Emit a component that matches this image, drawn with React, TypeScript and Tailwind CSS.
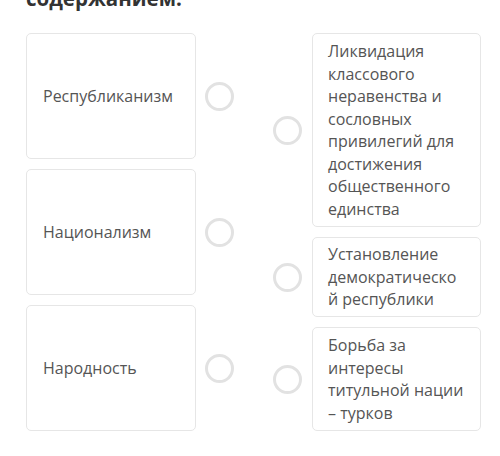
//--------------------------------------------------------------------//
// Constants

const left = ['Республиканизм', 'Национализм', 'Народность'];

const right = [
  {
    text: 'Ликвидация классового неравенства и сословных привилегий для достижения общественного единства',
    height: 'h-[194px]'
  },
  { text: 'Установление демократической республики', height: 'h-[80px]' },
  { text: 'Борьба за интересы титульной нации – турков', height: 'h-[104px]' }
];

//--------------------------------------------------------------------//
// Components

/**
 * Empty radio style circle
 */
function Dot() {
  return (
    <span className="block w-[29px] h-[29px] shrink-0 rounded-full border-[3px] border-[#e2e2e2] bg-white" />
  );
}

/**
 * Main page component
 */
export default function App() {
  return (
    <div
      className="w-[500px] h-[456px] bg-white overflow-hidden text-[#555]"
      style={{ fontFamily: '"Open Sans", "Noto Sans", sans-serif' }}
    >
      <div className="h-[33px] px-[26px] overflow-hidden">
        <p className="-mt-[16px] text-[20.5px] leading-[28px] font-bold text-[#333]">
          содержанием.
        </p>
      </div>
      <div className="flex pl-[26px]">
        {/* left column */}
        <div className="flex flex-col gap-[10px]">
          {left.map(label => (
            <div key={label} className="flex items-center gap-[9px]">
              <div className="w-[170px] h-[126px] flex items-center px-[16px] border border-[#e6e6e6] rounded-[5px] text-[16px]">
                {label}
              </div>
              <Dot />
            </div>
          ))}
        </div>
        {/* right column */}
        <div className="flex flex-col gap-[10px] ml-[39px]">
          {right.map(item => (
            <div key={item.text} className="flex items-center gap-[10px]">
              <Dot />
              <div className={
                'w-[169px] flex items-center px-[15px] border border-[#e6e6e6] '
                + 'rounded-[5px] text-[16px] leading-[22.5px] break-words '
                + item.height
              }>
                <span className="block w-full">{item.text}</span>
              </div>
            </div>
          ))}
        </div>
      </div>
    </div>
  );
}
